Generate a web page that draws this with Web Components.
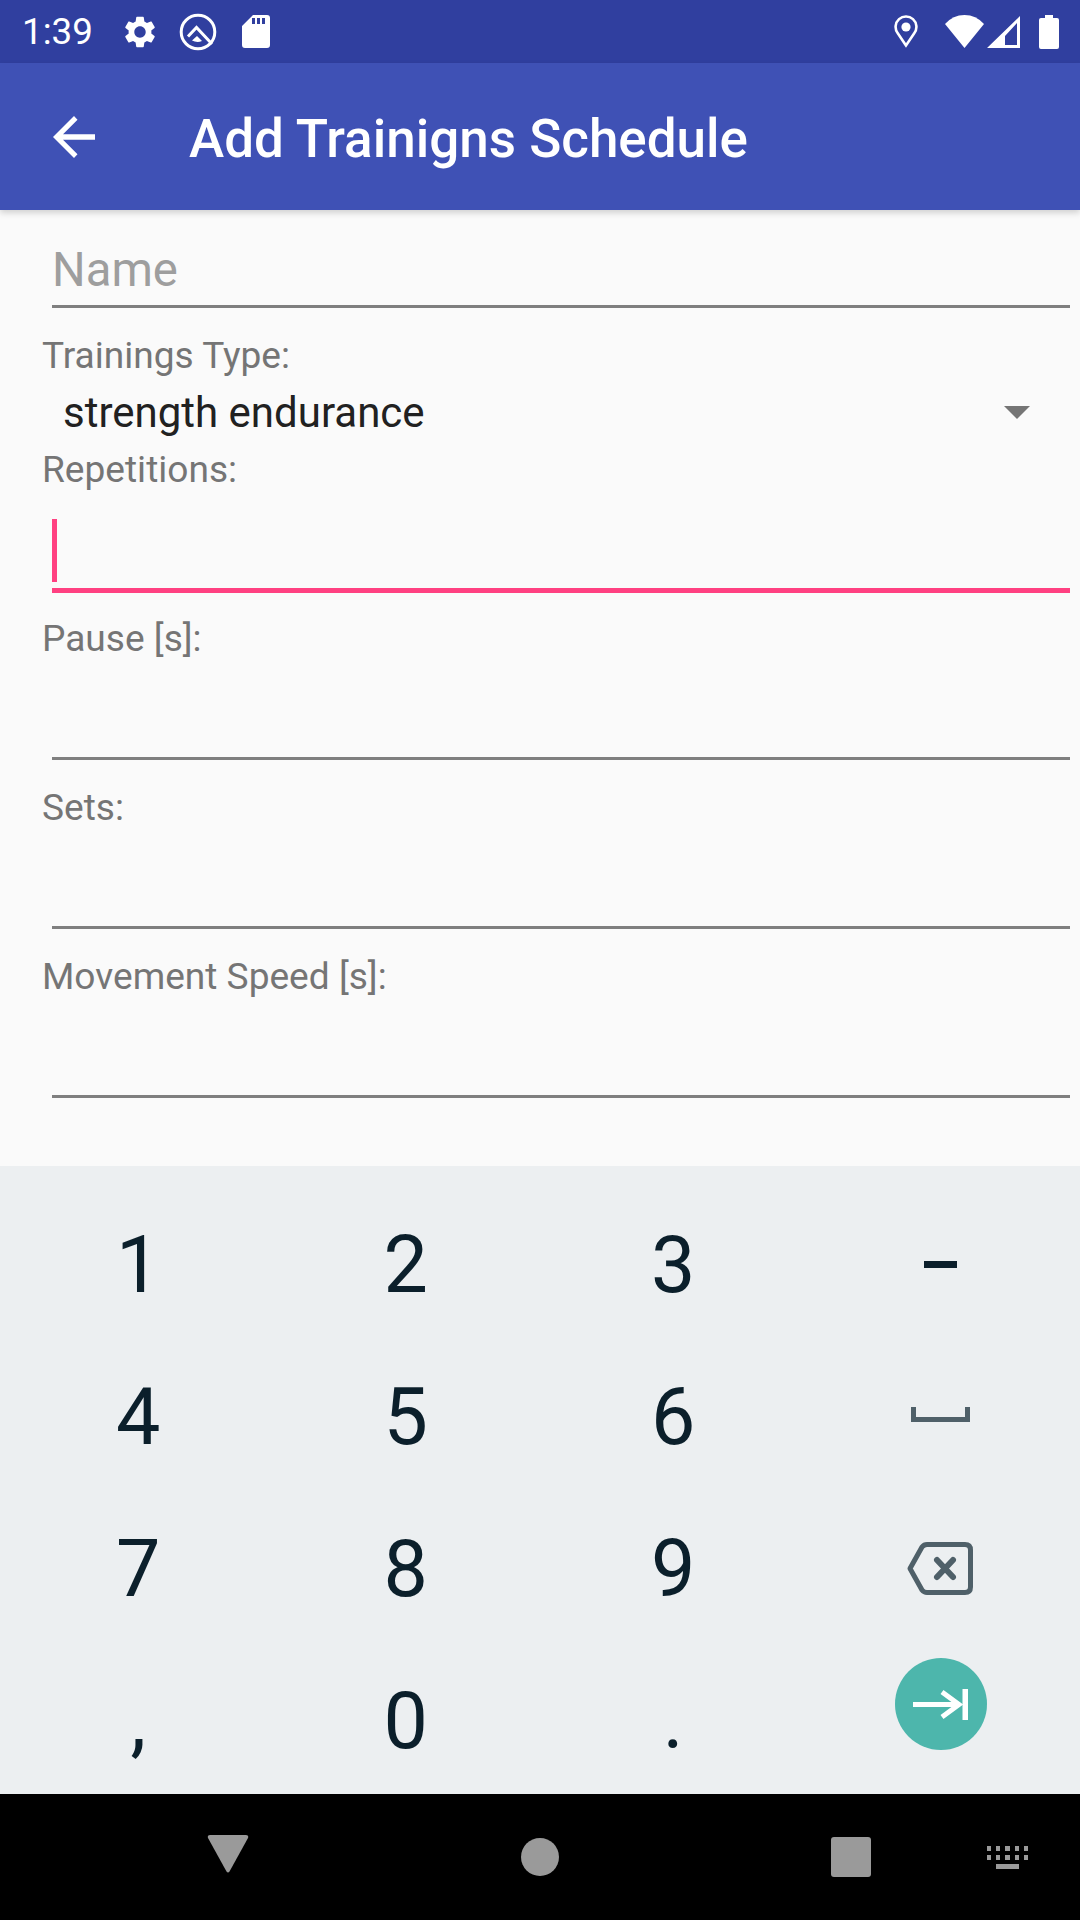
<!DOCTYPE html>
<html>
<head>
<meta charset="utf-8">
<title>Add Trainigns Schedule</title>
<style>
  html, body { margin: 0; padding: 0; }
  body {
    background: #fafafa;
    font-family: Roboto, sans-serif;
    height: 1920px;
    width: 1080px;
    overflow: hidden;
  }
  #screen { display: flex; flex-direction: column; height: 1920px; }
</style>
</head>
<body>
<div id="screen">
  <status-bar time="1:39"></status-bar>
  <app-bar label="Add Trainigns Schedule"></app-bar>
  <schedule-form>
    <text-field placeholder="Name"></text-field>
    <field-label style="margin-top: 26px">Trainings Type:</field-label>
    <type-spinner value="strength endurance"></type-spinner>
    <field-label>Repetitions:</field-label>
    <text-field tall focused></text-field>
    <field-label style="margin-top: 24px">Pause [s]:</field-label>
    <text-field tall></text-field>
    <field-label style="margin-top: 26px">Sets:</field-label>
    <text-field tall></text-field>
    <field-label style="margin-top: 26px">Movement Speed [s]:</field-label>
    <text-field tall></text-field>
  </schedule-form>
  <num-keyboard></num-keyboard>
  <nav-bar></nav-bar>
</div>

<script>
  // Top system bar
  class StatusBar extends HTMLElement {
    constructor() {
      super();

      const template = document.createElement( 'template' );
      template.innerHTML = `
        <style>
          :host {
            align-items: center;
            background: #303f9f;
            box-sizing: border-box;
            color: #ffffff;
            display: flex;
            flex: none;
            height: 63px;
            padding: 0 21px 0 22px;
          }

          span {
            font-size: 36.75px;
            width: 102px;
          }

          svg {
            display: block;
            fill: #ffffff;
            flex: none;
          }

          .spacer {
            flex: 1;
          }
        </style>
        <span></span>
        <svg width="38" height="38" viewBox="0 0 24 24" style="margin-left: -3px"><path d="M19.14 12.94c.04-.3.06-.61.06-.94 0-.32-.02-.64-.07-.94l2.03-1.58c.18-.14.23-.41.12-.61l-1.92-3.32c-.12-.22-.37-.29-.59-.22l-2.39.96c-.5-.38-1.03-.7-1.62-.94l-.36-2.54c-.04-.24-.24-.41-.48-.41h-3.84c-.24 0-.43.17-.47.41l-.36 2.54c-.59.24-1.13.57-1.62.94l-2.39-.96c-.22-.08-.47 0-.59.22L2.74 8.87c-.12.21-.08.47.12.61l2.03 1.58c-.05.3-.09.63-.09.94s.02.64.07.94l-2.03 1.58c-.18.14-.23.41-.12.61l1.92 3.32c.12.22.37.29.59.22l2.39-.96c.5.38 1.03.7 1.62.94l.36 2.54c.05.24.24.41.48.41h3.84c.24 0 .44-.17.47-.41l.36-2.54c.59-.24 1.13-.56 1.62-.94l2.39.96c.22.08.47 0 .59-.22l1.92-3.32c.12-.22.07-.47-.12-.61l-2.01-1.58zM12 15.6c-1.98 0-3.6-1.62-3.6-3.6s1.62-3.6 3.6-3.6 3.6 1.62 3.6 3.6-1.62 3.6-3.6 3.6z"/></svg>
        <svg width="38" height="38" viewBox="0 0 38 38" style="margin-left: 20px">
          <circle cx="19" cy="19" r="16.8" fill="none" stroke="#ffffff" stroke-width="3"/>
          <path d="M9 23.5 L17.5 14.5 L33 31" fill="none" stroke="#ffffff" stroke-width="3"/>
          <path d="M13 27.5 L18 23 L23 28 Q18 30 13 27.5 Z"/>
        </svg>
        <svg width="28" height="33" viewBox="0 0 28 33" style="margin-left: 25px">
          <path fill-rule="evenodd" d="M11 0 H25 Q28 0 28 3 V30 Q28 33 25 33 H3 Q0 33 0 30 V11 Z M10 3 V9 H13 V3 Z M15 3 V9 H18 V3 Z M20 3 V9 H23 V3 Z"/>
        </svg>
        <div class="spacer"></div>
        <svg width="24" height="33" viewBox="0 0 24 33">
          <path fill="none" stroke="#ffffff" stroke-width="2.6" d="M12 30.5 L3.6 18 A10.4 10.4 0 1 1 20.4 18 Z"/>
          <circle cx="12" cy="12" r="4.6"/>
        </svg>
        <svg width="39" height="33" viewBox="0 0 39 33" style="margin-left: 27px">
          <path d="M19.5 33 L0 9 Q8 0 19.5 0 Q31 0 39 9 Z"/>
        </svg>
        <svg width="33" height="32" viewBox="0 0 33 32" style="margin-left: 3px">
          <path fill-rule="evenodd" d="M33 0 V32 H0 Z M30 7 L18 20 V29 H30 Z"/>
        </svg>
        <svg width="20" height="34" viewBox="0 0 20 34" style="margin-left: 19px">
          <path d="M6 0 H14 V3 H18 Q20 3 20 5 V32 Q20 34 18 34 H2 Q0 34 0 32 V5 Q0 3 2 3 H6 Z"/>
        </svg>
      `;

      const shadowRoot = this.attachShadow( {mode: 'open'} );
      shadowRoot.appendChild( template.content.cloneNode( true ) );

      this.$time = shadowRoot.querySelector( 'span' );
    }

    connectedCallback() {
      this.$time.textContent = this.getAttribute( 'time' );
    }
  }

  // Indigo title bar
  class AppBar extends HTMLElement {
    constructor() {
      super();

      const template = document.createElement( 'template' );
      template.innerHTML = `
        <style>
          :host {
            align-items: center;
            background: #3f51b5;
            box-shadow: 0 3px 6px rgba( 0, 0, 0, 0.16 );
            box-sizing: border-box;
            color: #ffffff;
            display: flex;
            flex: none;
            height: 147px;
            padding: 0 0 0 53px;
            position: relative;
            z-index: 1;
          }

          svg {
            display: block;
            flex: none;
          }

          h1 {
            font-size: 53px;
            font-weight: 500;
            margin: 0 0 0 94px;
            padding-top: 4px;
            white-space: nowrap;
          }
        </style>
        <svg width="42" height="42" viewBox="0 0 42 42">
          <path d="M42 18.2 H10 L24.5 3.7 L21 0 L0 21 L21 42 L24.5 38.3 L10 23.8 H42 Z" fill="#ffffff"/>
        </svg>
        <h1></h1>
      `;

      const shadowRoot = this.attachShadow( {mode: 'open'} );
      shadowRoot.appendChild( template.content.cloneNode( true ) );

      this.$title = shadowRoot.querySelector( 'h1' );
    }

    connectedCallback() {
      this.$title.textContent = this.getAttribute( 'label' );
    }
  }

  class ScheduleForm extends HTMLElement {
    constructor() {
      super();

      const template = document.createElement( 'template' );
      template.innerHTML = `
        <style>
          :host {
            background: #fafafa;
            box-sizing: border-box;
            display: flex;
            flex: 1;
            flex-direction: column;
            min-height: 0;
            padding: 0 10px 0 42px;
          }
        </style>
        <slot></slot>
      `;

      this.attachShadow( {mode: 'open'} ).appendChild( template.content.cloneNode( true ) );
    }
  }

  // Grey caption above a field
  class FieldLabel extends HTMLElement {
    constructor() {
      super();

      const template = document.createElement( 'template' );
      template.innerHTML = `
        <style>
          :host {
            color: #757575;
            display: block;
            flex: none;
            font-size: 37.1px;
            height: 43px;
            line-height: 43px;
          }
        </style>
        <slot></slot>
      `;

      this.attachShadow( {mode: 'open'} ).appendChild( template.content.cloneNode( true ) );
    }
  }

  // Underlined input, pink when it has the focus
  class TextField extends HTMLElement {
    constructor() {
      super();

      const template = document.createElement( 'template' );
      template.innerHTML = `
        <style>
          :host {
            border-bottom: 3px solid #7f7f7f;
            box-sizing: border-box;
            color: #9e9e9e;
            display: block;
            flex: none;
            font-size: 47.25px;
            height: 98px;
            line-height: 58px;
            margin-left: 10px;
            padding-top: 31px;
            position: relative;
          }

          :host([tall]) {
            height: 100px;
          }

          :host([focused]) {
            border-bottom: 5px solid #ff4081;
            height: 102px;
          }

          .caret {
            background: #ff4081;
            display: none;
            height: 63px;
            left: 0;
            position: absolute;
            top: 28px;
            width: 5px;
          }

          :host([focused]) .caret {
            display: block;
          }
        </style>
        <span></span>
        <div class="caret"></div>
      `;

      const shadowRoot = this.attachShadow( {mode: 'open'} );
      shadowRoot.appendChild( template.content.cloneNode( true ) );

      this.$text = shadowRoot.querySelector( 'span' );
    }

    connectedCallback() {
      this.$text.textContent = this.getAttribute( 'placeholder' ) || '';
    }
  }

  // Dropdown with the selected type
  class TypeSpinner extends HTMLElement {
    constructor() {
      super();

      const template = document.createElement( 'template' );
      template.innerHTML = `
        <style>
          :host {
            align-items: center;
            box-sizing: border-box;
            color: #212121;
            display: flex;
            flex: none;
            font-size: 42px;
            height: 71px;
            padding: 0 40px 1px 21px;
          }

          span {
            flex: 1;
          }

          svg {
            display: block;
            flex: none;
            fill: #757575;
          }
        </style>
        <span></span>
        <svg width="26" height="13" viewBox="0 0 26 13"><path d="M0 0 H26 L13 13 Z"/></svg>
      `;

      const shadowRoot = this.attachShadow( {mode: 'open'} );
      shadowRoot.appendChild( template.content.cloneNode( true ) );

      this.$value = shadowRoot.querySelector( 'span' );
    }

    connectedCallback() {
      this.$value.textContent = this.getAttribute( 'value' );
    }
  }

  // One key of the number pad
  class PadKey extends HTMLElement {
    constructor() {
      super();

      const template = document.createElement( 'template' );
      template.innerHTML = `
        <style>
          :host {
            align-items: center;
            box-sizing: border-box;
            color: #0b1f2b;
            display: flex;
            font-size: 79px;
            height: 152px;
            justify-content: center;
            padding-top: 1px;
          }

          :host([icon]) {
            padding-top: 0;
          }
        </style>
        <slot></slot>
      `;

      this.attachShadow( {mode: 'open'} ).appendChild( template.content.cloneNode( true ) );
    }
  }

  // Numeric soft keyboard
  class NumKeyboard extends HTMLElement {
    constructor() {
      super();

      const template = document.createElement( 'template' );
      template.innerHTML = `
        <style>
          :host {
            background: #eceff1;
            box-sizing: border-box;
            display: grid;
            flex: none;
            grid-template-columns: repeat( 4, 267.5px );
            height: 628px;
            padding: 22px 0 0 4.5px;
          }

          svg {
            display: block;
          }

          .go {
            align-items: center;
            background: #4db6ac;
            border-radius: 50%;
            display: flex;
            height: 92px;
            justify-content: center;
            margin-top: -32px;
            width: 92px;
          }
        </style>
        <pad-key>1</pad-key><pad-key>2</pad-key><pad-key>3</pad-key>
        <pad-key icon>
          <svg width="33" height="7" viewBox="0 0 33 7"><rect width="33" height="7" fill="#0b1f2b"/></svg>
        </pad-key>
        <pad-key>4</pad-key><pad-key>5</pad-key><pad-key>6</pad-key>
        <pad-key icon>
          <svg width="59" height="15" viewBox="0 0 59 15" style="margin-top: -3px"><path d="M2.5 0 V12.5 H56.5 V0" fill="none" stroke="#4f6069" stroke-width="5"/></svg>
        </pad-key>
        <pad-key>7</pad-key><pad-key>8</pad-key><pad-key>9</pad-key>
        <pad-key icon>
          <svg width="66" height="53" viewBox="0 0 66 53" style="margin-left: -2px">
            <path d="M20 2.5 H58 Q63.5 2.5 63.5 8 V45 Q63.5 50.5 58 50.5 H20 Q17 50.5 15 48 L3 26.5 L15 5 Q17 2.5 20 2.5 Z" fill="none" stroke="#4f6069" stroke-width="5" stroke-linejoin="round"/>
            <path d="M30 18 L46 35 M46 18 L30 35" fill="none" stroke="#4f6069" stroke-width="6" stroke-linecap="round"/>
          </svg>
        </pad-key>
        <pad-key>,</pad-key><pad-key>0</pad-key><pad-key>.</pad-key>
        <pad-key icon>
          <div class="go">
            <svg width="55" height="31" viewBox="0 0 55 31">
              <path d="M0 15.5 H46 M29 3 L46 15.5 L29 28" fill="none" stroke="#ffffff" stroke-width="5"/>
              <rect x="49.5" y="0" width="5.5" height="31" fill="#ffffff"/>
            </svg>
          </div>
        </pad-key>
      `;

      this.attachShadow( {mode: 'open'} ).appendChild( template.content.cloneNode( true ) );
    }
  }

  // Bottom navigation bar
  class NavBar extends HTMLElement {
    constructor() {
      super();

      const template = document.createElement( 'template' );
      template.innerHTML = `
        <style>
          :host {
            align-items: flex-start;
            background: #000000;
            box-sizing: border-box;
            display: flex;
            flex: none;
            height: 126px;
            padding: 41px 0 0 207px;
          }

          svg {
            display: block;
            fill: #9a9a9a;
            flex: none;
          }
        </style>
        <svg width="42" height="38" viewBox="0 0 42 38"><path d="M3 0 H39 Q42 0 41 3 L22.5 36.5 Q21 38.5 19.5 36.5 L1 3 Q0 0 3 0 Z"/></svg>
        <svg width="38" height="38" viewBox="0 0 38 38" style="margin: 3px 0 0 272px"><circle cx="19" cy="19" r="19"/></svg>
        <svg width="40" height="40" viewBox="0 0 40 40" style="margin: 2px 0 0 272px"><rect width="40" height="40" rx="3"/></svg>
        <svg width="41" height="23" viewBox="0 0 41 23" style="margin: 11px 0 0 116px">
          <path d="M0 0 h4 v5 h-4 z M9 0 h4 v5 h-4 z M18 0 h5 v5 h-5 z M28 0 h4 v5 h-4 z M37 0 h4 v5 h-4 z M0 9 h4 v5 h-4 z M9 9 h4 v5 h-4 z M18 9 h5 v5 h-5 z M28 9 h4 v5 h-4 z M37 9 h4 v5 h-4 z M9 18 h23 v5 h-23 z"/>
        </svg>
      `;

      this.attachShadow( {mode: 'open'} ).appendChild( template.content.cloneNode( true ) );
    }
  }

  window.customElements.define( 'status-bar', StatusBar );
  window.customElements.define( 'app-bar', AppBar );
  window.customElements.define( 'schedule-form', ScheduleForm );
  window.customElements.define( 'field-label', FieldLabel );
  window.customElements.define( 'text-field', TextField );
  window.customElements.define( 'type-spinner', TypeSpinner );
  window.customElements.define( 'pad-key', PadKey );
  window.customElements.define( 'num-keyboard', NumKeyboard );
  window.customElements.define( 'nav-bar', NavBar );
</script>
</body>
</html>
